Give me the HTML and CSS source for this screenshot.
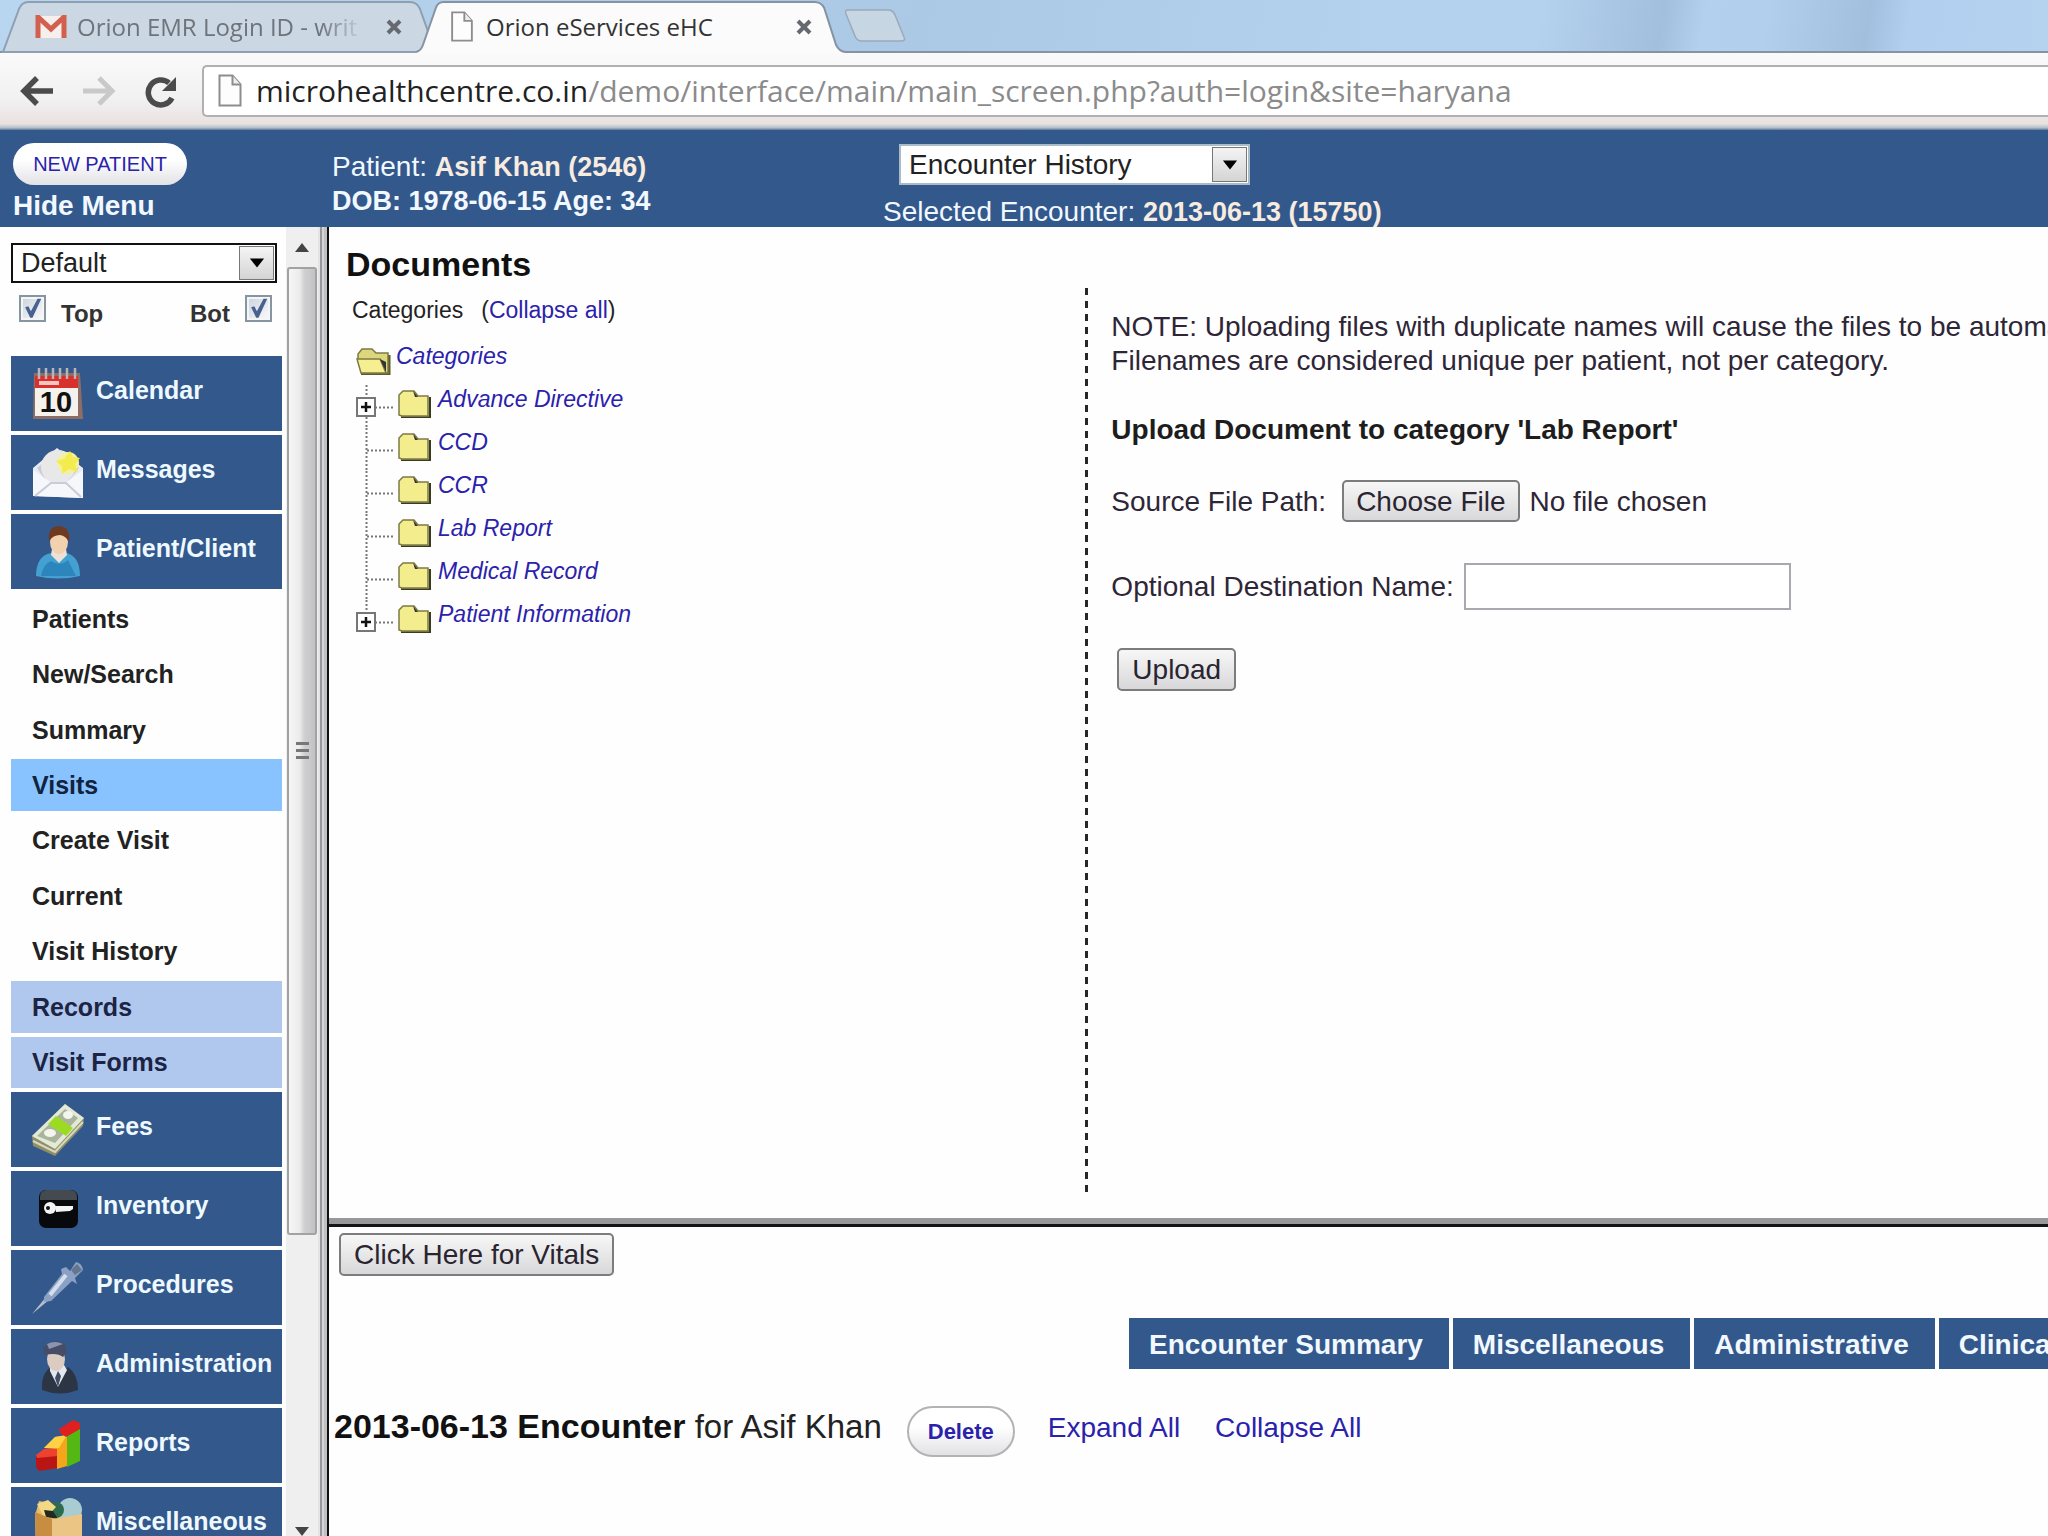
FILE: index.html
```html
<!DOCTYPE html>
<html lang="en">
<head>
<meta charset="utf-8">
<title>Orion eServices eHC</title>
<link rel="stylesheet" href="styles.css">
</head>
<body>
<svg class="defs" aria-hidden="true">
  <symbol id="page" viewBox="0 0 24 33"><path d="M1.500 1.500h13l8 9v21h-21z" fill="#fdfdfd" stroke="#8d8d8d" stroke-width="2"/><path d="M14.500 1.500v9h8" fill="#eee" stroke="#8d8d8d" stroke-width="2"/></symbol>
  <symbol id="cross" viewBox="0 0 16 16"><path d="M2 2l12 12M14 2L2 14" stroke="#666a70" stroke-width="4" fill="none"/></symbol>
  <symbol id="folder" viewBox="0 0 33 28"><path d="M3 27.500h29V7" fill="none" stroke="#3b3c1c" stroke-width="2.500"/><path d="M1 25V5l4-4h11l4 5h10v20H4z" fill="#f3ed8d" stroke="#7d7a45" stroke-width="1.500"/><path d="M15 1l5 6h-3z" fill="#333"/></symbol>
  <symbol id="through" viewBox="0 0 42 43"><path d="M10.500 0v43M11 22.500h28" fill="none" stroke="#777" stroke-width="2" stroke-dasharray="2 2"/></symbol>
  <symbol id="plus" viewBox="0 0 20 20"><path d="M1 1h18v18H1z" fill="#fff" stroke="#777" stroke-width="2"/><path d="M10 5v10M5 10h10" stroke="#111" stroke-width="2.500"/></symbol>
</svg>

<header class="browser">
  <div class="tabstrip">
    <div class="tab tab-back">
      <svg class="tab-shape" viewBox="0 0 432 53" preserveAspectRatio="none"><path d="M3 52L19 9Q22 2 28 2H410Q417 2 420 9L431 40L424 52z" fill="#cbd7e3" stroke="#8e9fb1" stroke-width="2"/></svg>
      <svg class="gmail" viewBox="0 0 32 24"><path d="M3 1h26v22H3z" fill="#f6efec"/><path d="M3 23V2l13 12L29 2v21" fill="none" stroke="#d2604f" stroke-width="5"/></svg>
      <span class="tab-title tab-title-fade">Orion EMR Login ID - writ</span>
      <button class="tab-close" aria-label="Close tab"><svg viewBox="0 0 16 16"><use href="#cross"/></svg></button>
    </div>
    <div class="tab tab-front">
      <svg class="tab-shape" viewBox="0 0 434 53" preserveAspectRatio="none"><path d="M0 52Q5 51 7 45L20 8Q22 2 28 2H402Q409 2 412 8L424 45Q427 51 433 52V53H0z" fill="#fbfbfc"/><path d="M0 52Q5 51 7 45L20 8Q22 2 28 2H402Q409 2 412 8L424 45Q427 51 433 52" fill="none" stroke="#8593a2" stroke-width="2"/></svg>
      <svg class="tab-page" viewBox="0 0 24 33"><use href="#page"/></svg>
      <span class="tab-title">Orion eServices eHC</span>
      <button class="tab-close" aria-label="Close tab"><svg viewBox="0 0 16 16"><use href="#cross"/></svg></button>
    </div>
    <button class="tab-new" aria-label="New tab"><svg viewBox="0 0 66 33"><path d="M3 1H44Q49 1 51 6L60 28Q62 32 57 32H18Q13 32 11 27L2 5Q1 1 3 1z" fill="#c6d6e3" stroke="#9aaabb" stroke-width="1.500"/></svg></button>
  </div>
  <div class="toolbar">
    <button class="tool" aria-label="Back"><svg viewBox="0 0 34 30"><path d="M4 15H33M17 2L4 15l13 13" fill="none" stroke="#4b4b4b" stroke-width="5.500"/></svg></button>
    <button class="tool" aria-label="Forward"><svg viewBox="0 0 34 30"><path d="M30 15H1M17 2l13 13-13 13" fill="none" stroke="#c9c9c9" stroke-width="5"/></svg></button>
    <button class="tool" aria-label="Reload"><svg viewBox="0 0 34 32"><path d="M28 22A12.500 12.500 0 1 1 25 7" fill="none" stroke="#4b4b4b" stroke-width="5.500"/><path d="M32 1v14H18z" fill="#4b4b4b"/></svg></button>
    <div class="address" role="textbox" aria-label="Address">
      <svg class="address-page" viewBox="0 0 24 33"><use href="#page"/></svg>
      <span class="url"><b>microhealthcentre.co.in</b>/demo/interface/main/main_screen.php?auth=login&amp;site=haryana</span>
    </div>
  </div>
</header>

<section class="banner">
  <div class="banner-menu">
    <button class="pill pill-new">NEW PATIENT</button>
    <a class="hide-menu" href="#">Hide Menu</a>
  </div>
  <div class="banner-patient">
    <p>Patient: <b class="warm">Asif Khan (2546)</b></p>
    <p><b>DOB: 1978-06-15 Age: 34</b></p>
  </div>
  <div class="banner-encounter">
    <div class="dropdown dropdown-encounter">
      <select aria-label="Encounter History"><option>Encounter History</option></select>
      <span class="dropdown-arrow"><svg viewBox="0 0 18 10"><path d="M1 0h16l-8 10z"/></svg></span>
    </div>
    <p>Selected Encounter: <b class="warm">2013-06-13 (15750)</b></p>
  </div>
</section>

<main class="frames">
  <aside class="sidebar">
    <div class="dropdown dropdown-layout">
      <select aria-label="Layout"><option>Default</option></select>
      <span class="dropdown-arrow"><svg viewBox="0 0 18 10"><path d="M1 0h16l-8 10z"/></svg></span>
    </div>
    <div class="frame-toggles">
      <label><input type="checkbox" checked>Top</label>
      <label>Bot<input type="checkbox" checked></label>
    </div>
    <nav class="menu">
      <a class="menu-item" href="#"><svg viewBox="0 0 52 54"><path d="M2 6h46l3 46H1z" fill="#8d6e66"/><path d="M3 20h43v29H3z" fill="#f5f1ec"/><path d="M3 9h43v12H3z" fill="#d8302c"/><path d="M7 14h20v4H7z" fill="#f5c4be"/><path d="M7 1v11M14 1v11M21 1v11M28 1v11M35 1v11M43 1v11" stroke="#b9b4b6" stroke-width="2.500"/><text x="24" y="45" text-anchor="middle" class="calendar-day">10</text></svg>Calendar</a>
      <a class="menu-item" href="#"><svg viewBox="0 0 52 54"><path d="M1 22L25 2l26 20v30L1 50z" fill="#e8ebf4"/><path d="M5 22L25 5l22 17-10 13H14z" fill="#c8ccd8"/><circle cx="26" cy="21" r="17" fill="#e9e8e8"/><circle cx="36" cy="17" r="11" fill="#f5f0a0"/><path d="M38 5l3 6 7 1-5 6 3 8-9-3-7 5v-8l-6-5 8-2z" fill="#f2ec4e"/><path d="M1 24l19 13h13l18-13v28L1 50z" fill="#f6f7fb"/><path d="M3 50l16-13h15l15 14" fill="none" stroke="#c8ccd8" stroke-width="2"/></svg>Messages</a>
      <a class="menu-item" href="#"><svg viewBox="0 0 52 54"><path d="M4 51q0-20 15-23l8 6 8-6q13 4 13 23-22 5-44 0z" fill="#45a0d2"/><path d="M9 51q2-12 10-15 9 6 17-1l8 16z" fill="#2c86bd"/><path d="M20 24h14l1 6-8 8-8-8z" fill="#eee2d8"/><ellipse cx="27" cy="17" rx="9" ry="12" fill="#f2d1ae"/><path d="M17 16q-2-14 10-15 12 1 10 16-3-6-9-7-7 0-11 6z" fill="#6e3a22"/></svg>Patient/Client</a>
      <div class="submenu">
        <a class="sub" href="#">Patients</a>
        <a class="sub" href="#">New/Search</a>
        <a class="sub" href="#">Summary</a>
        <a class="sub sub-active" href="#">Visits</a>
        <a class="sub" href="#">Create Visit</a>
        <a class="sub" href="#">Current</a>
        <a class="sub" href="#">Visit History</a>
        <a class="sub sub-group" href="#">Records</a>
        <a class="sub sub-group" href="#">Visit Forms</a>
      </div>
      <a class="menu-item" href="#"><svg viewBox="0 0 52 54"><path d="M0 33L33 1l19 14-1 8-28 30L1 43z" fill="#8e8f6a"/><path d="M0 33L33 1l19 14-29 31z" fill="#e4e8d6"/><path d="M5 33L33 6l13 9-23 25z" fill="#a9b59b"/><path d="M16 21l8-8 17 12-7 8z" fill="#9bdc22"/><ellipse cx="18" cy="30" rx="6" ry="4" fill="#f4f6ee"/><ellipse cx="36" cy="12" rx="5" ry="4" fill="#f4f6ee"/><path d="M1 38l22 11L51 19" stroke="#d8d9bb" stroke-width="2" fill="none"/></svg>Fees</a>
      <a class="menu-item" href="#"><svg viewBox="0 0 52 54"><rect x="7" y="8" width="39" height="38" rx="7" fill="#08090c"/><path d="M8 18v-3q0-7 7-7h23q7 0 7 7v3z" fill="#454950"/><circle cx="18" cy="26" r="6" fill="#f4f4f6"/><circle cx="16" cy="26" r="2" fill="#111"/><path d="M23 24h18v3l-3 2-14 1z" fill="#f4f4f6"/></svg>Inventory</a>
      <a class="menu-item" href="#"><svg viewBox="0 0 52 54"><path d="M0 53l14-17 3 3z" fill="#b5bccb"/><path d="M12 36L30 13l-1-5 5-2 4 4 6-9q6 1 7 8l-8 8 2 6-5-3-21 20-7 1z" fill="#8ba1c4"/><path d="M18 34L34 14" stroke="#d5deec" stroke-width="4"/><path d="M39 9l6-6 5 6-7 5z" fill="#65758e"/></svg>Procedures</a>
      <a class="menu-item" href="#"><svg viewBox="0 0 52 54"><path d="M10 50q-1-18 10-23l9 6 7-6q10 7 10 23-18 7-36 0z" fill="#2b3544"/><path d="M18 25h14l3 5-9 17-8-16z" fill="#e3e7ee"/><path d="M26 31l3 5-3 11-3-9z" fill="#414d66"/><ellipse cx="24" cy="19" rx="9" ry="12" fill="#dccbc0"/><path d="M11 8Q22-3 33 4l2 8-4 5q-6-5-18-2z" fill="#474d67"/><path d="M15 4q8-4 16 0l-14 5z" fill="#8d94ae"/></svg>Administration</a>
      <a class="menu-item" href="#"><svg viewBox="0 0 52 54"><path d="M4 37l22-4v16L7 52 4 48z" fill="#b81514"/><path d="M4 36l8-6 14-1v8L5 39z" fill="#ef4130"/><path d="M12 29l11-11 12-2v31l-10 3V30z" fill="#f5a51b"/><path d="M12 29l11-11 12-2-8 13z" fill="#ffd145"/><path d="M35 16l13-8v34l-13 6z" fill="#55b714"/><path d="M28 14l-1-4L41 1l7 3v6L34 18z" fill="#de2120"/></svg>Reports</a>
      <a class="menu-item" href="#"><svg viewBox="0 0 52 54"><path d="M3 18L7 3l11 2 10 8 10-9 12 14v36H4z" fill="#e6bd70"/><circle cx="38" cy="12" r="12" fill="#a9cbd2"/><circle cx="24" cy="12" r="8" fill="#2d6d4e"/><path d="M5 6l11-4 8 7-11 12z" fill="#f4d985"/><path d="M12 12l9 1 5 8-12-2z" fill="#222a20"/><path d="M3 14l17 7v33H4z" fill="#c98d42"/><path d="M20 21l30-5v38H20z" fill="#eac583"/></svg>Miscellaneous</a>
    </nav>
  </aside>
  <div class="scrollbar" aria-hidden="true">
    <span class="scroll-arrow"><svg viewBox="0 0 14 9"><path d="M0 9L7 0l7 9z"/></svg></span>
    <span class="scroll-thumb"><i></i><i></i><i></i></span>
    <span class="scroll-arrow scroll-arrow-down"><svg viewBox="0 0 14 9"><path d="M0 0h14L7 9z"/></svg></span>
  </div>
  <div class="divider-v"></div>

  <div class="panes">
    <section class="documents">
      <div class="categories">
        <h1>Documents</h1>
        <p class="categories-bar"><span>Categories</span><span>(<a href="#">Collapse all</a>)</span></p>
        <ul class="tree">
          <li class="tree-root"><svg class="folder-open" viewBox="0 0 35 28"><path d="M5 27h28V8" fill="none" stroke="#5d5b2c" stroke-width="3"/><path d="M2 12V7l4-5h10l4 4h12v20H6z" fill="#dcd77c" stroke="#7d7a45" stroke-width="1.500"/><path d="M1 12h23l6 14H5z" fill="#f5ef92" stroke="#7d7a45" stroke-width="1.500"/><path d="M24 12l6 13V15z" fill="#333"/></svg><a href="#">Categories</a></li>
          <li><svg class="branch" viewBox="0 0 42 43"><use href="#through"/><use href="#plus" x="0" y="12" width="20" height="20"/></svg><svg class="folder" viewBox="0 0 33 28"><use href="#folder"/></svg><a href="#">Advance Directive</a></li>
          <li><svg class="branch" viewBox="0 0 42 43"><use href="#through"/></svg><svg class="folder" viewBox="0 0 33 28"><use href="#folder"/></svg><a href="#">CCD</a></li>
          <li><svg class="branch" viewBox="0 0 42 43"><use href="#through"/></svg><svg class="folder" viewBox="0 0 33 28"><use href="#folder"/></svg><a href="#">CCR</a></li>
          <li><svg class="branch" viewBox="0 0 42 43"><use href="#through"/></svg><svg class="folder" viewBox="0 0 33 28"><use href="#folder"/></svg><a href="#">Lab Report</a></li>
          <li><svg class="branch" viewBox="0 0 42 43"><use href="#through"/></svg><svg class="folder" viewBox="0 0 33 28"><use href="#folder"/></svg><a href="#">Medical Record</a></li>
          <li><svg class="branch" viewBox="0 0 42 43"><path d="M10.500 0v22M11 22.500h28" fill="none" stroke="#777" stroke-width="2" stroke-dasharray="2 2"/><use href="#plus" x="0" y="12" width="20" height="20"/></svg><svg class="folder" viewBox="0 0 33 28"><use href="#folder"/></svg><a href="#">Patient Information</a></li>
        </ul>
      </div>
      <form class="upload">
        <p class="note">NOTE: Uploading files with duplicate names will cause the files to be automatically renamed.<br>Filenames are considered unique per patient, not per category.</p>
        <h2>Upload Document to category 'Lab Report'</h2>
        <div class="field field-source"><label for="source">Source File Path:</label><input id="source" type="file"></div>
        <div class="field field-name"><label for="destination">Optional Destination Name:</label><input id="destination" type="text"></div>
        <button class="btn btn-upload" type="button">Upload</button>
      </form>
    </section>
    <div class="divider-h"></div>
    <section class="encounter">
      <button class="btn btn-vitals" type="button">Click Here for Vitals</button>
      <nav class="form-tabs">
        <a href="#">Encounter Summary</a><a href="#">Miscellaneous</a><a href="#">Administrative</a><a href="#">Clinical</a>
      </nav>
      <div class="encounter-bar">
        <h2><b>2013-06-13 Encounter</b> for Asif Khan</h2>
        <button class="pill pill-delete" type="button">Delete</button>
        <a href="#">Expand All</a>
        <a href="#">Collapse All</a>
      </div>
    </section>
  </div>
</main>
</body>
</html>
```
FILE: styles.css
```css
* { box-sizing: border-box; }
body {
  margin: 0;
  height: 100vh;
  display: flex;
  flex-direction: column;
  overflow: hidden;
  background: #fefefe;
  color: #222;
  font: 28px/33px "Liberation Sans", Arial, sans-serif;
}
h1, h2, p, ul { margin: 0; padding: 0; font-weight: normal; }
a { color: #2b22ac; text-decoration: none; }
button, input, select { font: inherit; color: inherit; margin: 0; }
button { padding: 0; border: 0; background: none; }
svg { display: block; flex: none; }
.defs { position: absolute; width: 0; height: 0; }

/* browser chrome */
.browser { flex: none; font-family: "Open Sans", "Noto Sans", sans-serif; }
.tabstrip {
  display: flex;
  height: 53px;
  border-bottom: 2px solid #8593a2;
  background: linear-gradient(100deg, #b9d6f1 0, #abc8e4 45%, #b4d1ee 68%, #b4d1ee 75%, #a3bfde 81%, #b4d0ef 83%, #b2cfee 86%, #a3bfde 91%, #b3cff0 93%, #b5d2ef 100%);
}
.tab { position: relative; display: flex; align-items: center; height: 53px; }
.tab-back { width: 416px; padding: 0 14px 0 35px; color: #6d747c; }
.tab-front { width: 430px; padding: 0 34px 0 34px; color: #333; }
.tab-shape { position: absolute; left: 0; top: 0; width: 100%; height: 100%; overflow: visible; }
.tab-back .tab-shape { width: 432px; }
.gmail, .tab-page, .tab-title, .tab-close { position: relative; }
.gmail { width: 32px; height: 24px; }
.tab-page { width: 24px; height: 31px; }
.tab-title { flex: 1; margin-left: 12px; font-size: 24px; white-space: nowrap; overflow: hidden; }
.tab-back .tab-title { margin-left: 10px; }
.tab-title-fade { flex: none; width: 290px; -webkit-mask-image: linear-gradient(90deg, #000 84%, transparent 99%); mask-image: linear-gradient(90deg, #000 84%, transparent 99%); }
.tab-back .tab-close { margin-left: auto; }
.tab-close { width: 16px; height: 16px; }
.tab-new { align-self: center; margin-left: -2px; width: 66px; height: 33px; }
.toolbar {
  display: flex;
  align-items: center;
  gap: 28px;
  height: 77px;
  padding: 0 0 2px 20px;
  overflow: hidden;
  background: linear-gradient(#fafafb, #f1f1f2 60%, #e9e2df 92%, #b4bfcd 97%, #5f7894);
}
.tool { width: 34px; height: 30px; }
.address {
  flex: 1;
  display: flex;
  align-items: center;
  gap: 14px;
  height: 52px;
  margin-left: -4px;
  padding-left: 14px;
  border: 2px solid #b0b0b0;
  border-right: 0;
  border-radius: 5px 0 0 5px;
  background: #fff;
}
.address-page { width: 24px; height: 33px; }
.url { font-size: 30px; line-height: 40px; color: #8b8b8b; white-space: nowrap; }
.url b { font-weight: normal; color: #222; }

/* patient banner */
.banner { flex: none; display: flex; height: 97px; background: #33588c; color: #f2f8ff; }
.banner a { color: inherit; }
.banner b { font-size: 27px; }
.banner .warm { color: #f7ecdf; }
.banner-menu { width: 319px; padding: 13px 0 0 13px; }
.banner-patient { width: 551px; margin-left: 13px; padding-top: 20px; }
.banner-encounter { padding-top: 14px; white-space: nowrap; }
.banner-encounter p { padding-top: 10px; }
.pill { border-radius: 26px; background: linear-gradient(#fff 40%, #e2e2e6); color: #2b22ac; }
.pill-new { display: block; width: 174px; height: 42px; font-size: 20px; }
.hide-menu { display: block; padding-top: 4px; font-weight: bold; }
.dropdown { position: relative; }
.dropdown select { appearance: none; display: block; width: 100%; height: 100%; border-radius: 0; background: #fff; color: #222; }
.dropdown-arrow {
  position: absolute;
  top: 3px;
  right: 3px;
  bottom: 3px;
  width: 35px;
  display: grid;
  place-items: center;
  border: 1px solid #777;
  background: linear-gradient(#f4f4f4, #d4d4d4);
  pointer-events: none;
}
.dropdown-arrow svg { width: 16px; height: 10px; }
.dropdown-encounter { width: 351px; height: 41px; margin-left: 16px; }
.dropdown-encounter select { padding: 0 8px; border: 2px solid #a9bac9; }
.dropdown-layout { width: 266px; height: 40px; }
.dropdown-layout select { padding: 0 8px; border: 2px solid #111; font-size: 27px; }

/* frames */
.frames { flex: 1; min-height: 0; display: flex; }
.sidebar { flex: none; width: 286px; padding: 16px 4px 0 11px; overflow: hidden; }
.frame-toggles { display: flex; justify-content: space-between; padding: 12px 10px 24px 8px; }
.frame-toggles label { display: flex; gap: 15px; font-size: 24px; line-height: 37px; font-weight: bold; color: #333; }
.frame-toggles input { appearance: none; width: 27px; height: 27px; border: 2px solid #8795a3; background: linear-gradient(135deg, #cbd3dc, #fbfbfd); box-shadow: inset 0 0 0 2px #f3f5f7; }
.frame-toggles input::before { content: ""; display: block; height: 23px; background: #47628f; clip-path: polygon(18% 45%, 32% 40%, 43% 62%, 72% 8%, 88% 8%, 50% 90%, 40% 90%); }
.menu { display: grid; gap: 4px; }
.menu-item { display: flex; align-items: center; gap: 12px; height: 75px; padding: 0 0 7px 21px; background: #33588c; color: #edf8ff; font-size: 25px; line-height: 30px; font-weight: bold; }
.menu-item svg { width: 52px; height: 54px; margin-top: 7px; }
.calendar-day { font: bold 29px "Liberation Sans", Arial, sans-serif; fill: #111; }
.submenu { display: grid; grid-auto-rows: 1fr; gap: 4px; height: 495px; }
.sub { display: flex; align-items: center; padding-left: 21px; color: #222; font-size: 25px; line-height: 30px; font-weight: bold; }
.sub-active { background: #89c3ff; color: #10233f; }
.sub-group { background: #b0c8ee; color: #1b2445; }
.scrollbar { flex: none; display: flex; flex-direction: column; align-items: center; width: 32px; background: #efefef; overflow: hidden; }
.scroll-arrow { flex: none; height: 40px; padding-top: 16px; }
.scroll-arrow svg { width: 14px; height: 9px; fill: #444; }
.scroll-thumb {
  flex: 967 1 0;
  width: 30px;
  display: flex;
  flex-direction: column;
  align-items: center;
  justify-content: center;
  gap: 4px;
  border: 2px solid #a2a2a5;
  border-radius: 3px;
  background: linear-gradient(90deg, #f6f6f6, #ececec 40%, #cfcfd1 60%, #c2c2c6);
}
.scroll-thumb i { width: 13px; height: 3px; background: #777; }
.scroll-arrow-down { flex: 286 1 0; display: flex; align-items: flex-end; }
.divider-v { flex: none; width: 11px; background: linear-gradient(90deg, #e4e4e4 0 2px, #98989b 2px 4px, #d5d5d7 4px 6px, #c0c0c3 6px 9px, #111 9px); }
.panes { flex: 1; min-width: 0; display: flex; flex-direction: column; }
.documents { flex: 991 1 0; min-height: 0; display: flex; }
.divider-h { flex: none; height: 9px; border-bottom: 3px solid #141416; background: #98989a; }
.encounter { flex: 309 1 0; min-height: 0; overflow: hidden; }

/* document categories */
.categories { flex: 0 0 44%; padding: 17px 0 0 17px; }
.categories h1 { color: #111; font-size: 34px; line-height: 40px; font-weight: bold; }
.categories-bar { display: flex; gap: 18px; padding: 12px 0 18px 6px; font-size: 23px; line-height: 28px; }
.tree { list-style: none; padding-left: 10px; font-size: 23px; line-height: 28px; font-style: italic; }
.tree li { display: flex; height: 43px; }
.branch { width: 42px; height: 43px; }
.folder { width: 33px; height: 28px; margin: 5px 7px 0 0; }
.folder-open { width: 35px; height: 28px; margin: 5px 5px 0 0; }

/* upload form */
.upload { flex: 1; min-width: 0; margin: 61px 0 21px; padding: 22px 0 0 26px; overflow: hidden; color: #2e2636; background: repeating-linear-gradient(#26262b 0 7px, #fff0 7px 13px) 0 0 / 3px 100% no-repeat; }
.note { line-height: 34px; white-space: nowrap; }
.upload h2 { padding-top: 35px; color: #1d1d1d; font-size: 28px; font-weight: bold; }
.field { display: flex; align-items: center; }
.field-source { gap: 16px; margin-top: 34px; height: 42px; }
.field-source input { width: 400px; height: 42px; }
.field-source input::file-selector-button { height: 42px; margin: 0 10px 0 0; padding: 0 12px; font: inherit; }
.field-name { gap: 10px; margin-top: 41px; height: 47px; }
.field-name input { width: 327px; height: 47px; padding: 0 8px; border: 2px solid #aaa8ae; background: #fff; }
.btn, .field-source input::file-selector-button { border: 2px solid #7c7c7c; border-radius: 5px; background: linear-gradient(#f7f7f7, #d8d8da); color: #2a2430; }
.btn { display: block; height: 43px; padding: 0 13px; }
.btn-upload { margin: 38px 0 0 6px; }

/* encounter pane */
.btn-vitals { margin: 6px 0 0 10px; }
.form-tabs { display: flex; gap: 4px; margin: 42px 0 0 800px; }
.form-tabs a { flex: none; padding: 10px 26px 8px 20px; background: #33588c; color: #f2f8ff; font-weight: bold; }
.encounter-bar { display: flex; align-items: flex-start; margin-top: 37px; padding-left: 5px; line-height: 44px; white-space: nowrap; }
.encounter-bar h2 { margin-right: 25px; font-size: 33px; line-height: 40px; }
.encounter-bar b { color: #111; font-size: 34px; }
.encounter-bar a { margin-right: 35px; }
.pill-delete { width: 108px; height: 51px; margin-right: 33px; border: 2px solid #b3b3b6; font-size: 22px; font-weight: bold; }
```
